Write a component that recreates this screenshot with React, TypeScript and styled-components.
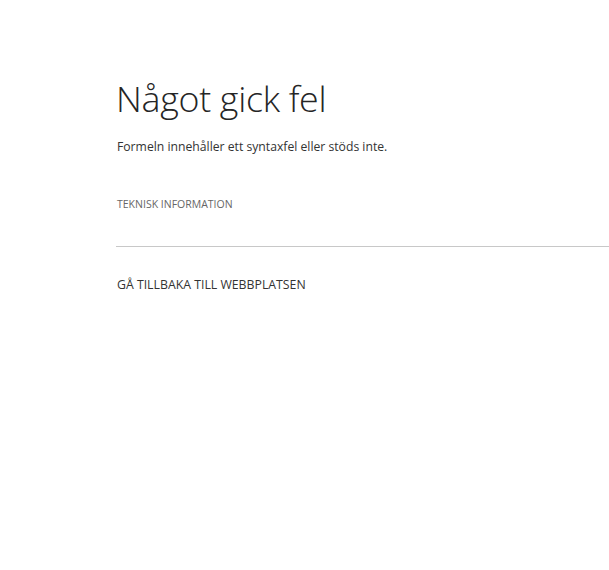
import React from "react";
import styled, { createGlobalStyle } from "styled-components";

const Global = createGlobalStyle`
  html, body { margin: 0; padding: 0; background: #fff; }
  body { font-family: "Open Sans", "Noto Sans", sans-serif; color: #333; }
`;

const Page = styled.main`
  padding: 74px 0 0 116px;
`;

const Title = styled.h1`
  margin: 0;
  font-size: 35.8px;
  font-weight: 300;
  line-height: 48px;
  color: #252525;
  letter-spacing: -0.3px;
`;

const Message = styled.p`
  margin: 16px 0 0 1px;
  font-size: 12.2px;
  line-height: 18px;
  color: #333;
`;

const TechLink = styled.div`
  margin: 41px 0 0 1px;
  font-size: 10.5px;
  line-height: 14px;
  color: #666;
  text-transform: uppercase;
`;

const Divider = styled.hr`
  margin: 35px 0 0 0;
  border: 0;
  border-top: 1px solid #c8c8c8;
`;

const BackLink = styled.a`
  display: block;
  margin: 30px 0 0 1px;
  font-size: 12.3px;
  line-height: 16px;
  color: #333;
  text-decoration: none;
  text-transform: uppercase;
`;

export default function App() {
  return (
    <>
      <Global />
      <Page>
        <Title>Något gick fel</Title>
        <Message>Formeln innehåller ett syntaxfel eller stöds inte.</Message>
        <TechLink>Teknisk information</TechLink>
        <Divider />
        <BackLink href="#">Gå tillbaka till webbplatsen</BackLink>
      </Page>
    </>
  );
}
